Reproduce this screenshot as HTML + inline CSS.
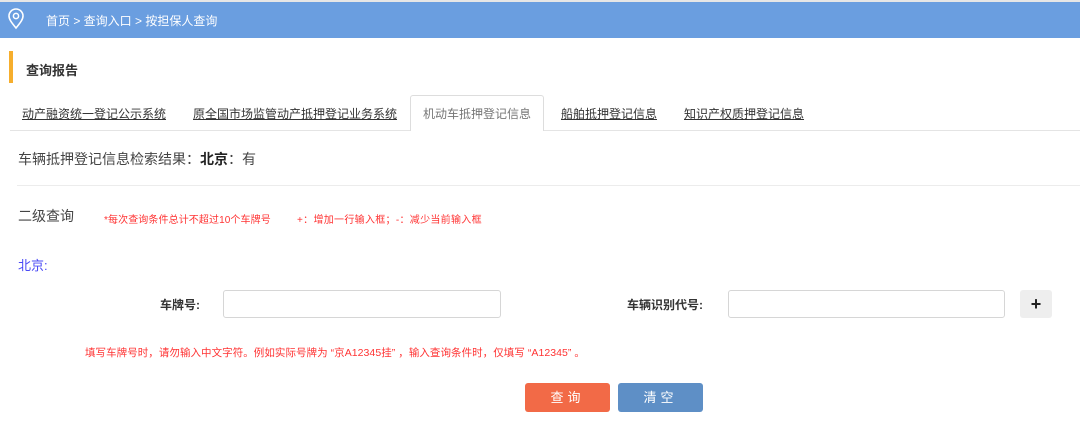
<!DOCTYPE html>
<html><head><meta charset="utf-8"><style>
body{margin:0;width:1080px;height:447px;background:#fff;position:relative;overflow:hidden;font-family:"Liberation Sans","Noto Sans CJK SC",sans-serif;}
.a{position:absolute;white-space:nowrap;}
.tab{font-size:12px;color:#333;text-decoration:underline;top:105px;}
input{position:absolute;border:1px solid #d6d6d6;border-radius:3px;height:28px;box-sizing:border-box;}
</style></head><body>
<div class="a" style="left:0;top:0;width:1080px;height:2px;background:#e6e6e6"></div>
<div class="a" style="left:0;top:2px;width:1080px;height:36px;background:#6a9ee0"></div>
<svg class="a" style="left:7px;top:8px" width="18" height="22" viewBox="0 0 18 22"><path d="M9 20 C4 14 2 11 2 8 A7 7 0 0 1 16 8 C16 11 14 14 9 20Z" fill="none" stroke="#fff" stroke-width="1.6"/><circle cx="9" cy="8" r="2.6" fill="none" stroke="#fff" stroke-width="1.5"/></svg>
<div class="a" style="left:46px;top:12px;font-size:12px;color:#fff">首页 &gt; 查询入口 &gt; 按担保人查询</div>
<div class="a" style="left:9px;top:51px;width:4px;height:32px;background:#f6ae2d"></div>
<div class="a" style="left:26px;top:60px;font-size:13px;font-weight:bold;color:#333">查询报告</div>
<div class="a" style="left:10px;top:130px;width:1070px;height:1px;background:#e4e4e4"></div>
<div class="a" style="left:410px;top:95px;width:134px;height:36px;border:1px solid #ddd;border-bottom:none;border-radius:3px 3px 0 0;background:#fff;box-sizing:border-box"></div>
<div class="a tab" style="left:22px">动产融资统一登记公示系统</div>
<div class="a tab" style="left:193px">原全国市场监管动产抵押登记业务系统</div>
<div class="a tab" style="left:423px;color:#777;text-decoration:none">机动车抵押登记信息</div>
<div class="a tab" style="left:561px">船舶抵押登记信息</div>
<div class="a tab" style="left:684px">知识产权质押登记信息</div>
<div class="a" style="left:18px;top:149px;font-size:14px;color:#444">车辆抵押登记信息检索结果：<b style="color:#222">北京</b>：有</div>
<div class="a" style="left:17px;top:185px;width:1063px;height:1px;background:#ececec"></div>
<div class="a" style="left:18px;top:206px;font-size:14px;color:#444">二级查询</div>
<div class="a" style="left:104px;top:211px;font-size:10px;color:#f33;letter-spacing:0.1px">*每次查询条件总计不超过10个车牌号</div>
<div class="a" style="left:297px;top:211px;font-size:10px;color:#f33;letter-spacing:0.3px">+：增加一行输入框；-：减少当前输入框</div>
<div class="a" style="left:18px;top:255px;font-size:13px;color:#4a4af5">北京:</div>
<div class="a" style="left:160px;top:296px;font-size:12px;font-weight:bold;color:#333">车牌号:</div>
<input style="left:223px;top:290px;width:278px">
<div class="a" style="left:627px;top:296px;font-size:12px;font-weight:bold;color:#333">车辆识别代号:</div>
<input style="left:728px;top:290px;width:277px">
<div class="a" style="left:1020px;top:290px;width:32px;height:28px;background:#eee;border-radius:3px;text-align:center;line-height:28px;font-size:18px;font-weight:bold;color:#222">+</div>
<div class="a" style="left:85px;top:345px;font-size:10.5px;color:#f33;letter-spacing:0.05px">填写车牌号时，请勿输入中文字符。例如实际号牌为 “京A12345挂” ，输入查询条件时，仅填写 “A12345” 。</div>
<div class="a" style="left:525px;top:383px;width:85px;height:29px;background:#f26a47;border-radius:3px;color:#fff;font-size:13px;text-align:center;line-height:29px;letter-spacing:4px">查询</div>
<div class="a" style="left:618px;top:383px;width:85px;height:29px;background:#5e8fc6;border-radius:3px;color:#fff;font-size:13px;text-align:center;line-height:29px;letter-spacing:4px">清空</div>
</body></html>
